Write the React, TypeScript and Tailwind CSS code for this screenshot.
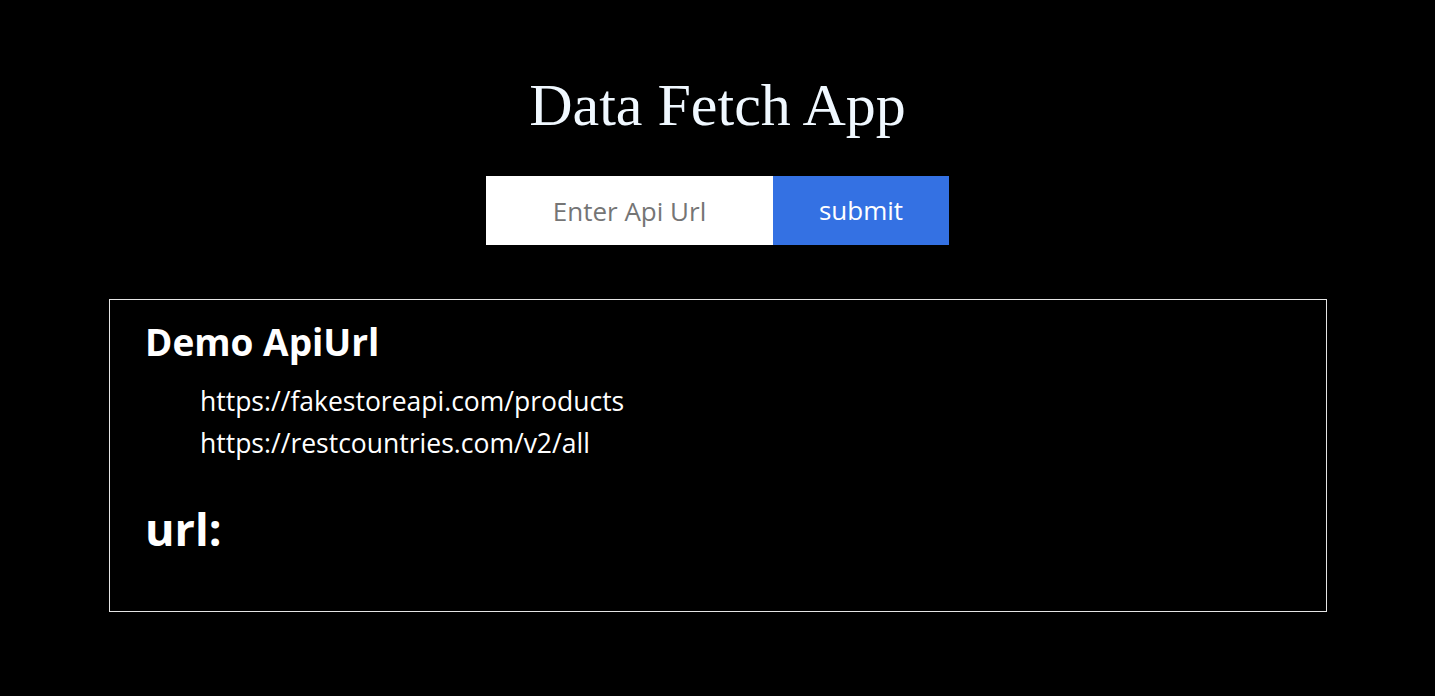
import React from "react";

export default function App() {
  return (
    <div className="min-h-[696px] w-full bg-black text-white" style={{ fontFamily: '"Open Sans", sans-serif' }}>
      <div className="flex flex-col items-center pt-[75px]">
        <h1
          className="text-[60px] leading-none text-[#f0f8ff]"
          style={{ fontFamily: '"Liberation Serif", serif' }}
        >
          Data Fetch App
        </h1>
        <div className="mt-[41px] flex">
          <input
            type="text"
            placeholder="Enter Api Url"
            className="h-[69px] w-[287px] bg-white text-center text-[26px] text-black outline-none placeholder:text-[#757575]"
          />
          <button className="h-[69px] w-[176px] bg-[#3471e3] text-[26px] text-white">submit</button>
        </div>
      </div>
      <div className="ml-[109px] mt-[54px] w-[1218px] border border-[#e5e5e5] pl-[35px] pt-[23px] pb-[60px]">
        <h2 className="text-[37px] font-bold leading-none">Demo ApiUrl</h2>
        <ul className="mt-[20px] pl-[55px] text-[26.5px] leading-[42px]">
          <li>https://fakestoreapi.com/products</li>
          <li>https://restcountries.com/v2/all</li>
        </ul>
        <h1 className="mt-[42px] text-[45px] font-bold leading-none">url:</h1>
      </div>
    </div>
  );
}
